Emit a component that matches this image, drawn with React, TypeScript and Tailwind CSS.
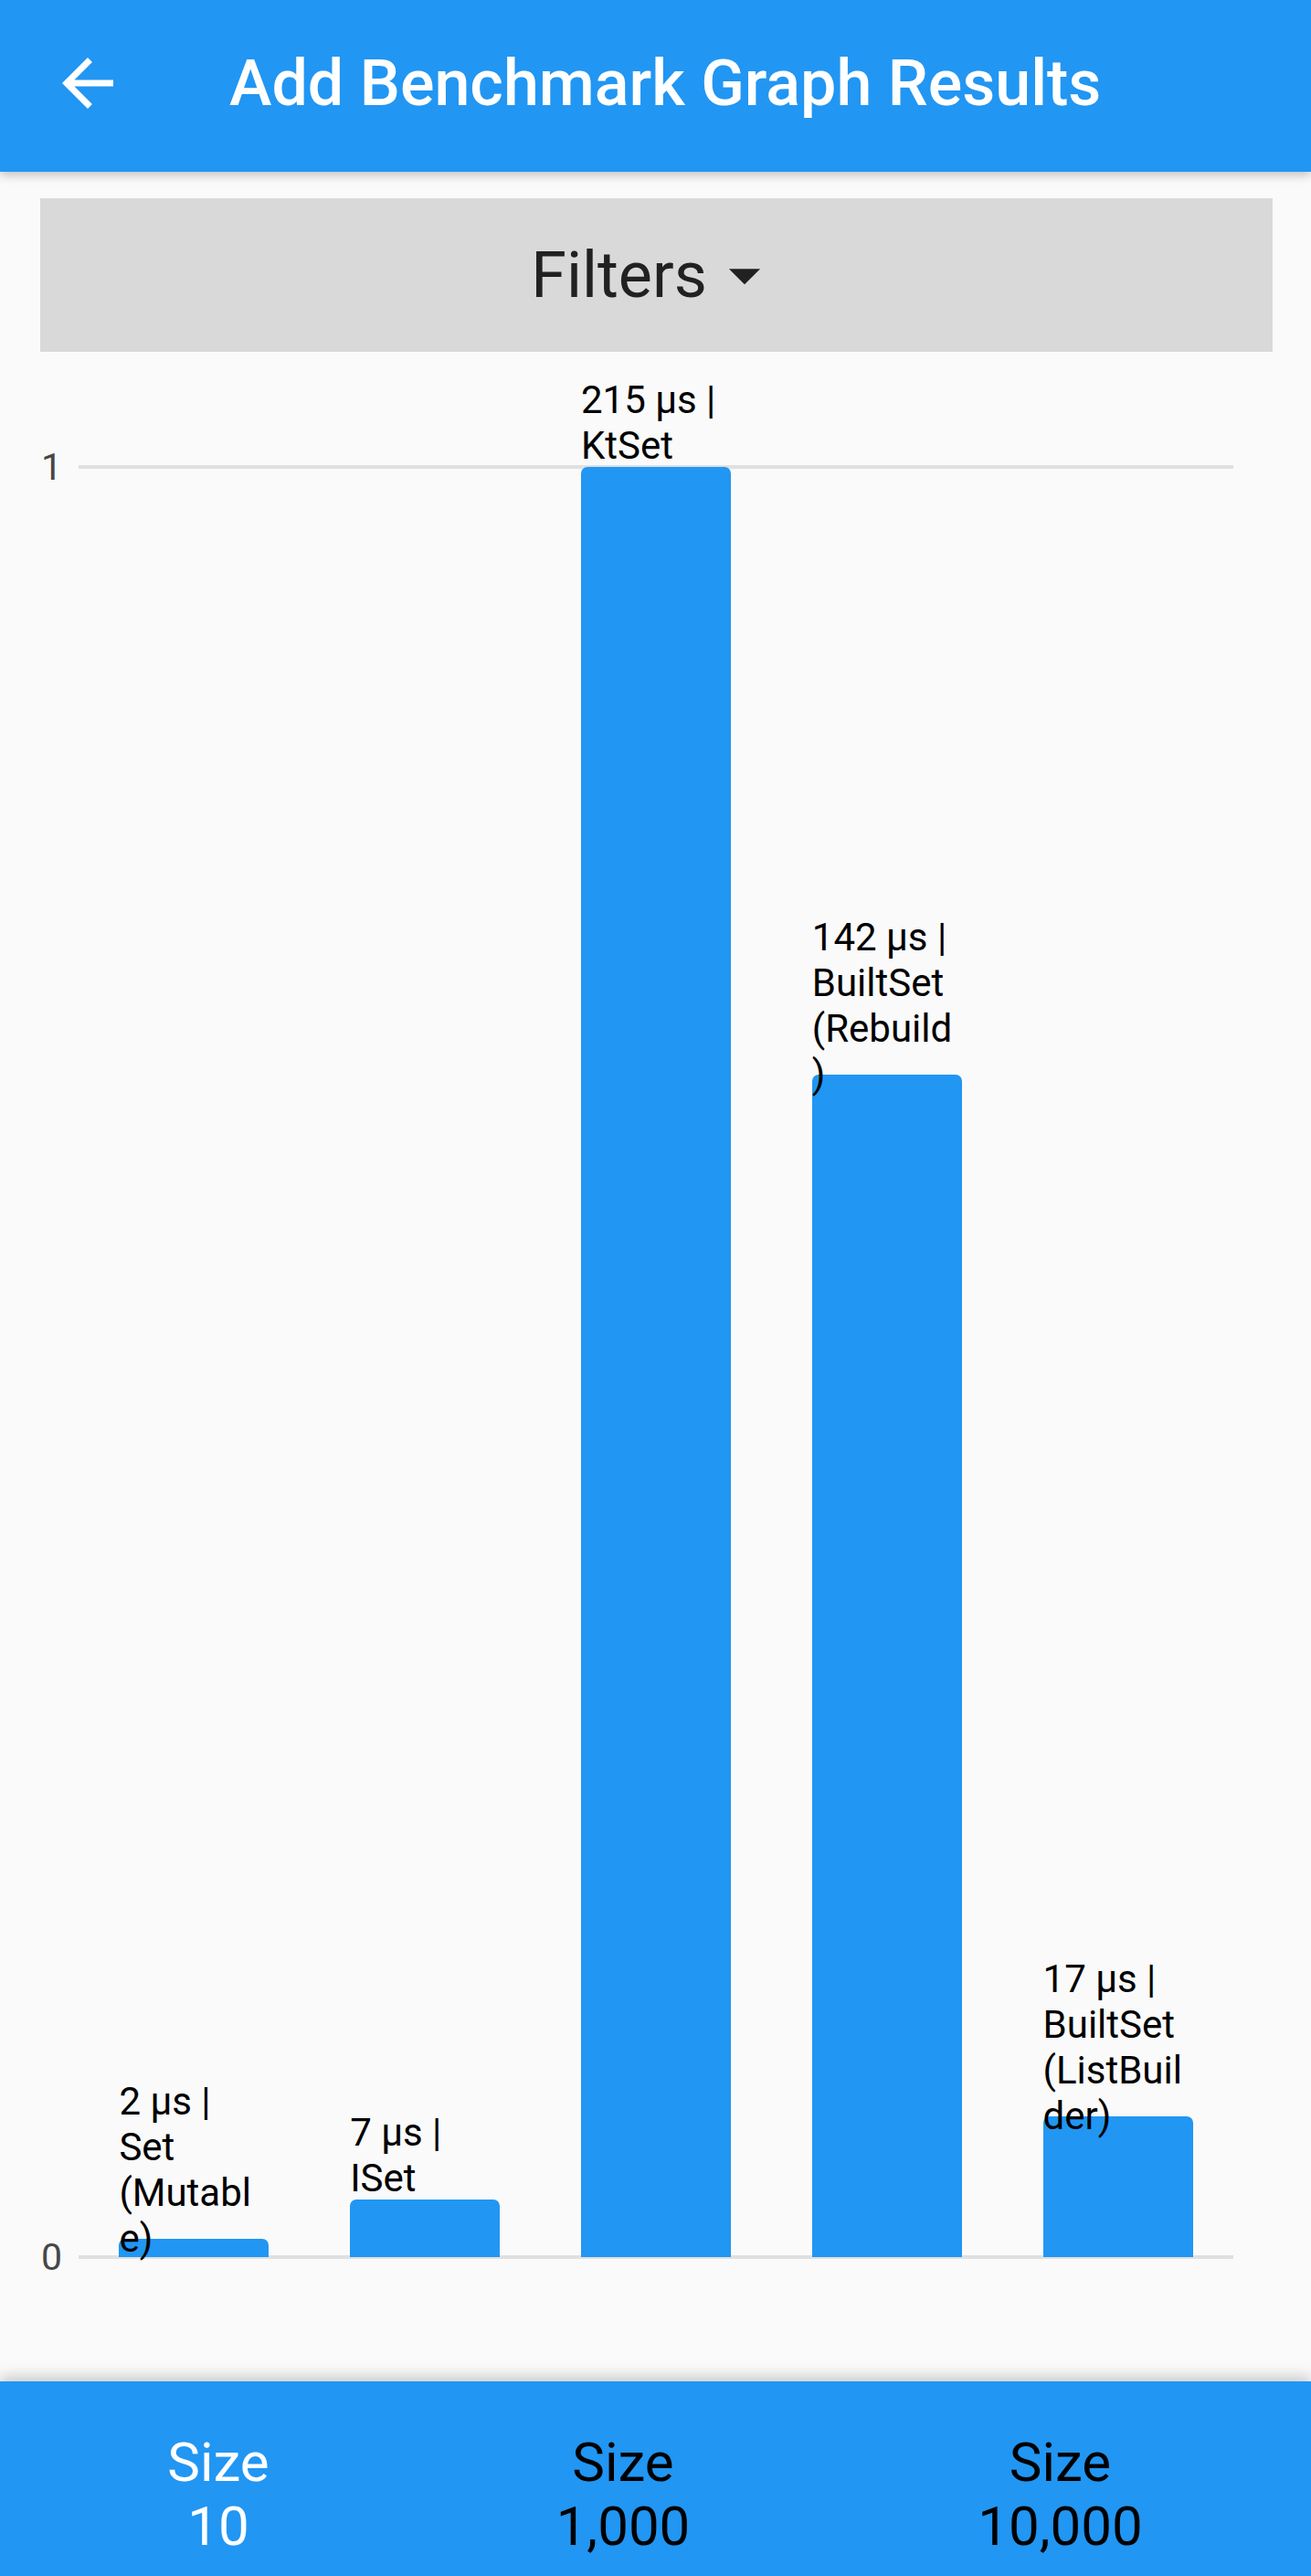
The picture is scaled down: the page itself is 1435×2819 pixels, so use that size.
import React from 'react';

type BarData = {
    lines: string[];
    micros: number;
};

// values in µs, max bar = 215
const bars: BarData[] = [
    { lines: ['2 µs |', 'Set', '(Mutabl', 'e)'], micros: 2.2 },
    { lines: ['7 µs |', 'ISet'], micros: 6.9 },
    { lines: ['215 µs |', 'KtSet'], micros: 215 },
    { lines: ['142 µs |', 'BuiltSet', '(Rebuild', ')'], micros: 142 },
    { lines: ['17 µs |', 'BuiltSet', '(ListBuil', 'der)'], micros: 16.9 },
];

const MAX = 215;
const PLOT_HEIGHT = 1959;

function BackArrow() {
    return (
        <svg className="w-[84px] h-[84px] text-white" viewBox="0 0 24 24" fill="currentColor">
            <path d="M20 11H7.83l5.59-5.59L12 4l-8 8 8 8 1.41-1.41L7.83 13H20v-2z" />
        </svg>
    );
}

function DropDown() {
    return (
        <svg className="w-[82px] h-[82px] text-[#212121]" viewBox="0 0 24 24" fill="currentColor">
            <path d="M7 10l5 5 5-5z" />
        </svg>
    );
}

function Chart() {
    return (
        <div className="relative ml-[86px] mt-[126px] w-[1264px] h-[1959px]">
            {/* grid lines */}
            <div className="absolute left-0 right-0 top-0 h-[4px] -translate-y-1/2 bg-[#e0e0e0]"></div>
            <div className="absolute left-0 right-0 bottom-0 h-[4px] translate-y-1/2 bg-[#e0e0e0]"></div>

            {/* axis labels */}
            <span className="absolute left-[-41px] top-0 -translate-y-1/2 text-[41px] leading-[48px] text-[#474747]">1</span>
            <span className="absolute left-[-41px] bottom-0 translate-y-1/2 text-[41px] leading-[48px] text-[#474747]">0</span>

            <div className="relative h-full flex justify-around items-end">
                {bars.map((bar, idx) => (
                    <div
                        key={idx}
                        className="relative w-[164px] bg-[#2196f3] rounded-t-[7px]"
                        style={{ height: `${(bar.micros / MAX) * PLOT_HEIGHT}px` }}
                    >
                        <div className={`absolute left-0 w-[200px] text-[42px] leading-[50px] text-black ${bar.lines.length > 2 ? 'top-[-175px]' : 'top-[-98px]'}`}>
                            {bar.lines.map((line, i) => (
                                <div key={i} className="whitespace-nowrap">{line}</div>
                            ))}
                        </div>
                    </div>
                ))}
            </div>
        </div>
    );
}

export default function App() {
    return (
        <div className="min-h-[2819px] w-full flex flex-col bg-[#fafafa] font-[Roboto,sans-serif] overflow-hidden">
            {/* App bar */}
            <header className="relative z-10 h-[188px] bg-[#2196f3] flex items-center pl-[54px] pb-[6px] shadow-[0_4px_10px_rgba(0,0,0,0.22)]">
                <BackArrow />
                <h1 className="ml-[113px] text-white text-[70px] leading-[84px] font-medium whitespace-nowrap">
                    Add Benchmark Graph Results
                </h1>
            </header>

            <main className="flex-1 pt-[29px]">
                {/* Filters */}
                <div className="ml-[44px] mr-[42px] h-[168px] bg-[#d9d9d9] flex items-center justify-center">
                    <span className="text-[70px] leading-[84px] text-[#212121]">Filters</span>
                    <DropDown />
                </div>

                <Chart />
            </main>

            {/* Bottom navigation */}
            <nav className="relative z-10 h-[213px] bg-[#2196f3] flex pt-[54px] shadow-[0_-6px_14px_rgba(0,0,0,0.18)] text-[60px] leading-[70px] text-center">
                <div className="w-[478px] text-white">
                    <div>Size</div>
                    <div>10</div>
                </div>
                <div className="w-[408px] text-black">
                    <div>Size</div>
                    <div>1,000</div>
                </div>
                <div className="flex-1 text-black">
                    <div>Size</div>
                    <div>10,000</div>
                </div>
            </nav>
        </div>
    );
}
